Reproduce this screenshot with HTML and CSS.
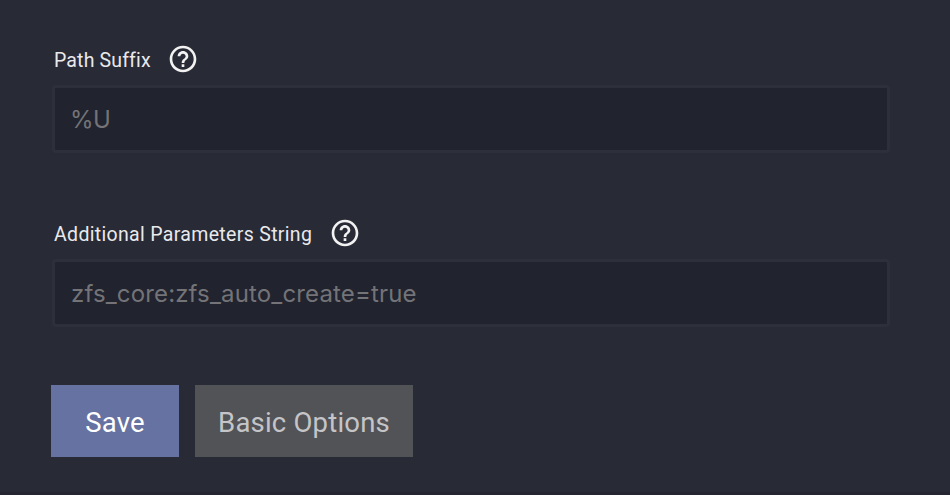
FILE: index.html
```html
<!DOCTYPE html>
<html lang="en">
<head>
<meta charset="utf-8">
<title>Share options</title>
<link rel="stylesheet" href="styles.css">
</head>
<body>
<form class="form">
  <div class="field">
    <div class="label-row">
      <label class="label tight" for="suffix">Path Suffix</label>
      <svg class="help" viewBox="0 0 24 24"><path d="M11 18h2v-2h-2v2zm1-16C6.480 2 2 6.480 2 12s4.480 10 10 10 10-4.480 10-10S17.520 2 12 2zm0 18c-4.410 0-8-3.590-8-8s3.590-8 8-8 8 3.590 8 8-3.590 8-8 8zm0-14c-2.210 0-4 1.790-4 4h2c0-1.100.9-2 2-2s2 .9 2 2c0 2-3 1.750-3 5h2c0-2.250 3-2.500 3-5 0-2.210-1.790-4-4-4z"/></svg>
    </div>
    <input class="input tight" id="suffix" type="text" placeholder="%U">
  </div>
  <div class="field">
    <div class="label-row">
      <label class="label" for="params">Additional Parameters String</label>
      <svg class="help" viewBox="0 0 24 24"><path d="M11 18h2v-2h-2v2zm1-16C6.480 2 2 6.480 2 12s4.480 10 10 10 10-4.480 10-10S17.520 2 12 2zm0 18c-4.410 0-8-3.590-8-8s3.590-8 8-8 8 3.590 8 8-3.590 8-8 8zm0-14c-2.210 0-4 1.790-4 4h2c0-1.100.9-2 2-2s2 .9 2 2c0 2-3 1.750-3 5h2c0-2.250 3-2.500 3-5 0-2.210-1.790-4-4-4z"/></svg>
    </div>
    <input class="input" id="params" type="text" placeholder="zfs_core:zfs_auto_create=true">
  </div>
  <div class="actions">
    <button type="button" class="btn save">Save</button>
    <button type="button" class="btn basic">Basic Options</button>
  </div>
</form>
</body>
</html>
```
FILE: styles.css
```css
* { box-sizing: border-box; }
body {
  margin: 0;
  height: 495px;
  overflow: hidden;
  background: #282a35;
  border-bottom: 3px solid #252632;
}
.form { padding: 43px 60px 0 52px; }
.field { height: 174px; }
.label-row { display: flex; align-items: center; height: 32px; padding-left: 2px; }
.label {
  padding-top: 3px;
  font: 19.5px/24px Roboto, sans-serif;
  letter-spacing: 0.33px;
  color: #e9e9ec;
}
.label.tight { letter-spacing: 0.15px; }
.help { width: 32px; height: 32px; margin-left: 16.5px; fill: #f2f2f2; }
.input {
  display: block;
  width: 100%;
  height: 68px;
  margin-top: 10px;
  padding: 0 16px;
  border: 3px solid #2d2f3a;
  border-radius: 4px;
  background: #21232e;
  font: 24px Inter, sans-serif;
  letter-spacing: 0.15px;
  color: #eeeef0;
}
.input.tight { padding-left: 15px; letter-spacing: -0.5px; }
.input::placeholder { color: #737378; opacity: 1; }
.actions { display: flex; gap: 16px; margin: -6px 0 0 -1px; }
.btn {
  height: 72px;
  padding: 3px 0 0;
  border: 0;
  font: 27.5px Roboto, sans-serif;
  letter-spacing: 0.2px;
}
.save { width: 128px; background: #6672a1; color: #fff; }
.basic { width: 218px; background: #525357; color: #c5c5c7; }
```
